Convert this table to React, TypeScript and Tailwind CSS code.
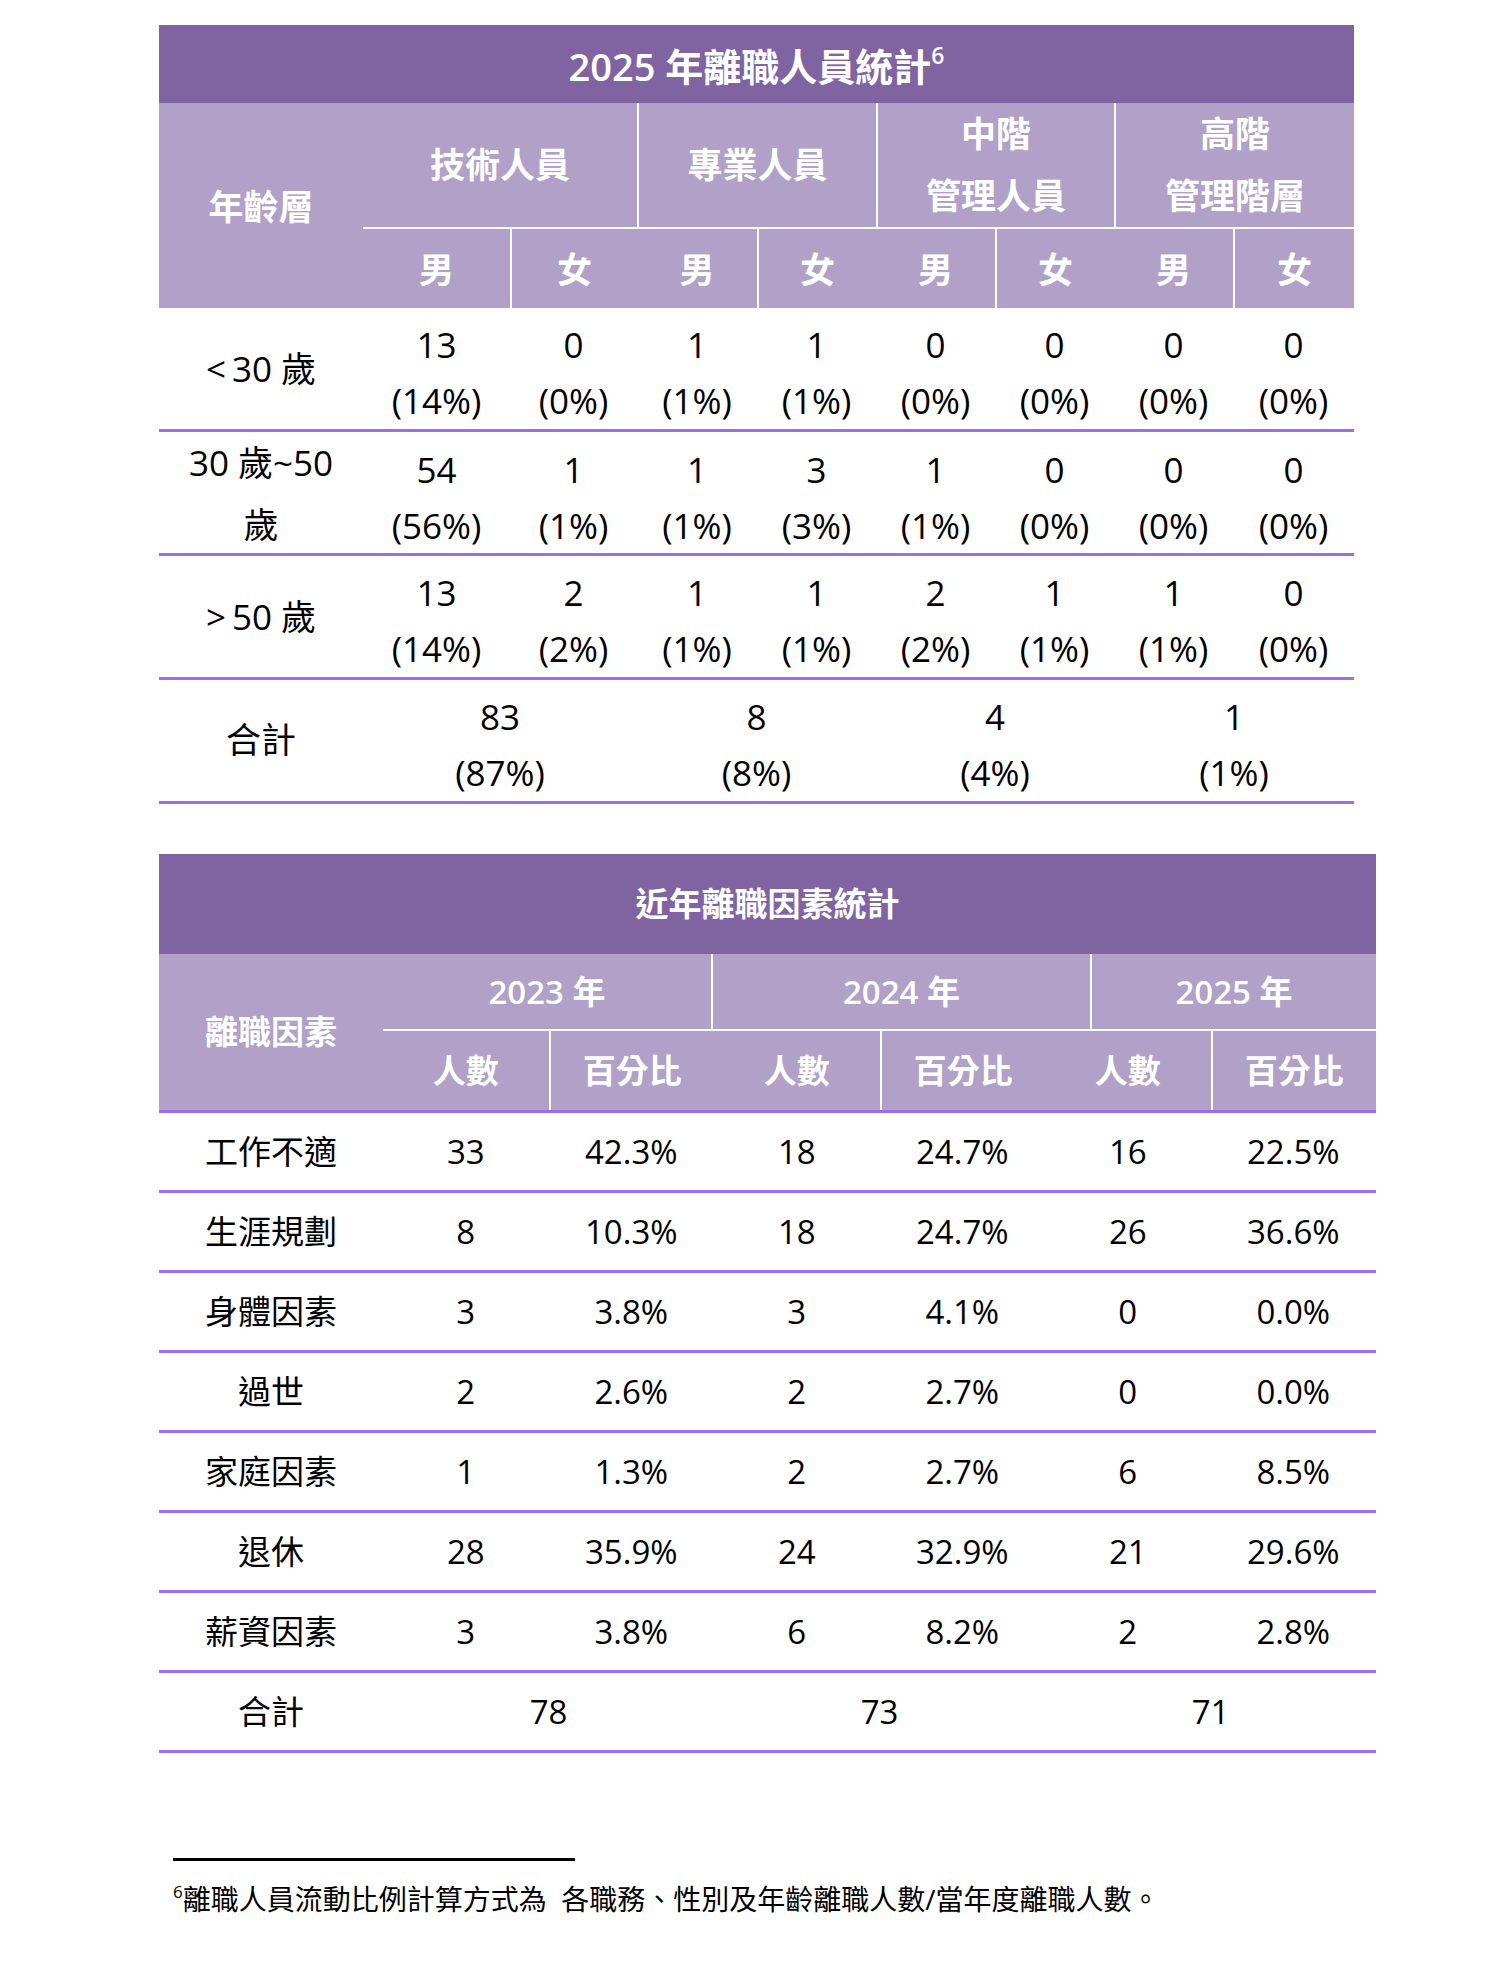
const LINE = "border-[#9a6cf0]";

const ageRows = [
  {
    label: (
      <>
        <span className="pr-[6px]">&lt;</span>30 歲
      </>
    ),
    cells: [
      ["13", "(14%)"],
      ["0", "(0%)"],
      ["1", "(1%)"],
      ["1", "(1%)"],
      ["0", "(0%)"],
      ["0", "(0%)"],
      ["0", "(0%)"],
      ["0", "(0%)"],
    ],
  },
  {
    label: (
      <>
        30 歲~50
        <br />歲
      </>
    ),
    cells: [
      ["54", "(56%)"],
      ["1", "(1%)"],
      ["1", "(1%)"],
      ["3", "(3%)"],
      ["1", "(1%)"],
      ["0", "(0%)"],
      ["0", "(0%)"],
      ["0", "(0%)"],
    ],
  },
  {
    label: (
      <>
        <span className="pr-[6px]">&gt;</span>50 歲
      </>
    ),
    cells: [
      ["13", "(14%)"],
      ["2", "(2%)"],
      ["1", "(1%)"],
      ["1", "(1%)"],
      ["2", "(2%)"],
      ["1", "(1%)"],
      ["1", "(1%)"],
      ["0", "(0%)"],
    ],
  },
];

const ageTotals = [
  ["83", "(87%)"],
  ["8", "(8%)"],
  ["4", "(4%)"],
  ["1", "(1%)"],
];

const reasons = [
  ["工作不適", "33", "42.3%", "18", "24.7%", "16", "22.5%"],
  ["生涯規劃", "8", "10.3%", "18", "24.7%", "26", "36.6%"],
  ["身體因素", "3", "3.8%", "3", "4.1%", "0", "0.0%"],
  ["過世", "2", "2.6%", "2", "2.7%", "0", "0.0%"],
  ["家庭因素", "1", "1.3%", "2", "2.7%", "6", "8.5%"],
  ["退休", "28", "35.9%", "24", "32.9%", "21", "29.6%"],
  ["薪資因素", "3", "3.8%", "6", "8.2%", "2", "2.8%"],
];

function AgeTable() {
  const cols = "grid grid-cols-[204px_147px_127px_120px_119px_119px_119px_119px_121px]";
  return (
    <div className="w-[1195px]">
      <div className={`${cols} grid-rows-[78px_126px_79px] font-semibold text-white`}>
        <div className="col-span-9 flex items-center justify-center bg-[#8064a2] pt-1 text-[38px]">
          2025 年離職人員統計<sup className="text-[23px]">6</sup>
        </div>
        <div className="row-span-2 flex items-center justify-center bg-[#b1a0c7] pt-1 text-[35px]">
          年齡層
        </div>
        <div className="col-span-2 flex items-center justify-center border-b-2 border-white bg-[#b1a0c7] text-[35px]">
          技術人員
        </div>
        <div className="col-span-2 flex items-center justify-center border-b-2 border-l-2 border-white bg-[#b1a0c7] text-[35px]">
          專業人員
        </div>
        <div className="col-span-2 flex flex-col items-center justify-center border-b-2 border-l-2 border-white bg-[#b1a0c7] text-[35px] leading-[62px]">
          <span>中階</span>
          <span>管理人員</span>
        </div>
        <div className="col-span-2 flex flex-col items-center justify-center border-b-2 border-l-2 border-white bg-[#b1a0c7] text-[35px] leading-[62px]">
          <span>高階</span>
          <span>管理階層</span>
        </div>
        {["男", "女", "男", "女", "男", "女", "男", "女"].map((g, i) => (
          <div
            key={i}
            className={`flex items-center justify-center bg-[#b1a0c7] pt-1 text-[35px] ${
              i % 2 === 1 ? "border-l-2 border-white" : ""
            }`}
          >
            {g}
          </div>
        ))}
      </div>

      {ageRows.map((row, r) => (
        <div key={r} className={`${cols} h-[124px] border-b-[3px] ${LINE} text-[35px] text-black`}>
          <div className="flex items-center justify-center text-center leading-[62px]">{row.label}</div>
          {row.cells.map(([n, p], i) => (
            <div key={i} className="flex flex-col items-center justify-center pt-2 leading-[56px]">
              <span>{n}</span>
              <span>{p}</span>
            </div>
          ))}
        </div>
      ))}

      <div className={`${cols} h-[124px] border-b-[3px] ${LINE} text-[35px] text-black`}>
        <div className="flex items-center justify-center">合計</div>
        {ageTotals.map(([n, p], i) => (
          <div key={i} className="col-span-2 flex flex-col items-center justify-center pt-2 leading-[56px]">
            <span>{n}</span>
            <span>{p}</span>
          </div>
        ))}
      </div>
    </div>
  );
}

function ReasonTable() {
  const cols = "grid grid-cols-[224px_repeat(6,1fr)]";
  const sub = ["人數", "百分比", "人數", "百分比", "人數", "百分比"];
  return (
    <div className="w-[1217px]">
      <div className="flex h-[100px] items-center justify-center bg-[#8064a2] text-[33px] font-semibold text-white">
        近年離職因素統計
      </div>

      <div className="flex bg-[#b1a0c7] font-semibold text-white">
        <div className={`flex w-[224px] items-center justify-center border-b-[3px] ${LINE} text-[33px]`}>
          離職因素
        </div>
        <div className="flex-1">
          <div className="grid h-[77px] grid-cols-[328px_379px_286px] border-b-2 border-white text-[33px]">
            <div className="flex items-center justify-center">2023 年</div>
            <div className="flex items-center justify-center border-l-2 border-white">2024 年</div>
            <div className="flex items-center justify-center border-l-2 border-white">2025 年</div>
          </div>
          <div className={`grid h-[82px] grid-cols-6 border-b-[3px] ${LINE} text-[33px]`}>
            {sub.map((s, i) => (
              <div
                key={i}
                className={`flex items-center justify-center ${i % 2 === 1 ? "border-l-2 border-white" : ""}`}
              >
                {s}
              </div>
            ))}
          </div>
        </div>
      </div>

      {reasons.map((row, r) => (
        <div key={r} className={`${cols} h-[80px] border-b-[3px] ${LINE} text-[33px] text-black`}>
          {row.map((c, i) => (
            <div key={i} className="flex items-center justify-center">
              {c}
            </div>
          ))}
        </div>
      ))}

      <div className={`grid h-[80px] grid-cols-[224px_repeat(3,1fr)] border-b-[3px] ${LINE} text-[33px] text-black`}>
        <div className="flex items-center justify-center">合計</div>
        <div className="flex items-center justify-center">78</div>
        <div className="flex items-center justify-center">73</div>
        <div className="flex items-center justify-center">71</div>
      </div>
    </div>
  );
}

export default function App() {
  return (
    <div className="min-h-screen bg-white pt-[25px] font-['Open_Sans','Noto_Sans_CJK_TC',sans-serif]">
      <div className="ml-[159px]">
        <AgeTable />
      </div>
      <div className="ml-[159px] mt-[50px]">
        <ReasonTable />
      </div>

      <div className="ml-[173px] mt-[105px] h-[3px] w-[402px] bg-black" />
      <p className="ml-[173px] mt-[20px] whitespace-pre text-[28px] leading-[36px] text-black">
        <sup className="top-[-12px] text-[17px]">6</sup>離職人員流動比例計算方式為  各職務、性別及年齡離職人數/當年度離職人數。
      </p>
    </div>
  );
}
